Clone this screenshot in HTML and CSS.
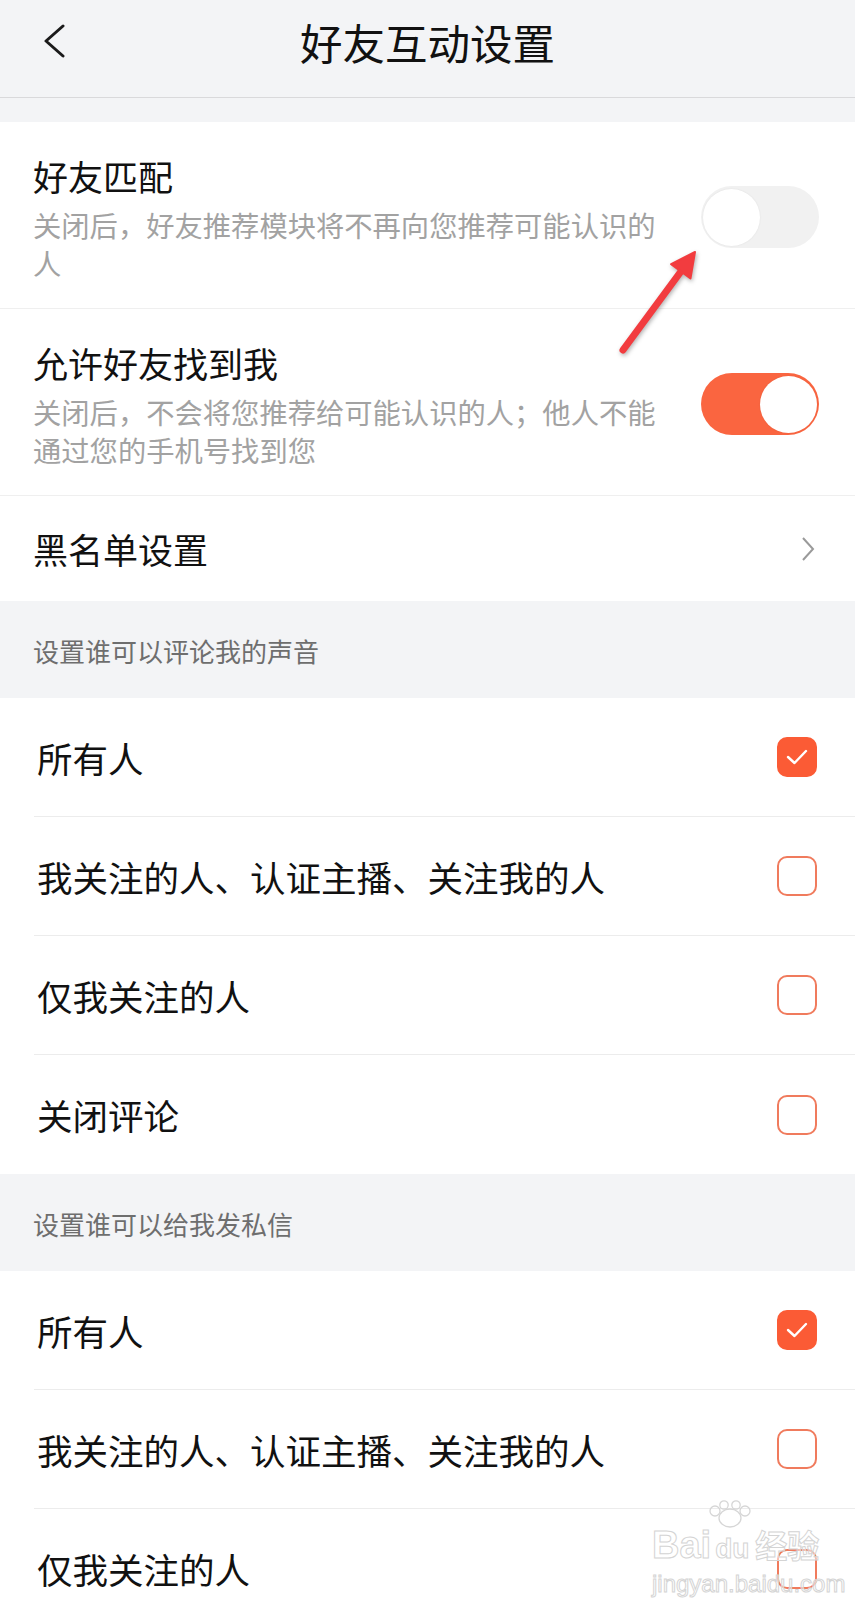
FILE: index.html
```html
<!DOCTYPE html>
<html lang="zh-CN">
<head>
  <meta charset="UTF-8" />
  <meta name="viewport" content="width=device-width, initial-scale=1.0"/>
  <title>好友互动设置</title>
  <link rel="stylesheet" href="styles.css">
</head>
<body>
<div class="page">
  <header class="nav">
    <span class="back">
      <svg width="24" height="34" viewBox="0 0 24 34"><polyline points="20,2 3,17 20,32" fill="none" stroke="#1a1a1a" stroke-width="3" stroke-linecap="round" stroke-linejoin="round"/></svg>
    </span>
    <h1>好友互动设置</h1>
    <span></span>
  </header>

  <div class="spacer"></div>

  <section class="group">
    <div class="switch-row">
      <div class="row-text">
        <div class="row-title">好友匹配</div>
        <div class="row-desc">关闭后，好友推荐模块将不再向您推荐可能认识的人</div>
      </div>
      <span class="switch"><span class="knob"></span></span>
    </div>
    <div class="switch-row">
      <div class="row-text">
        <div class="row-title">允许好友找到我</div>
        <div class="row-desc">关闭后，不会将您推荐给可能认识的人；他人不能通过您的手机号找到您</div>
      </div>
      <span class="switch on"><span class="knob"></span></span>
    </div>
    <div class="link-row">
      <span class="row-title">黑名单设置</span>
      <svg width="16" height="26" viewBox="0 0 16 26"><polyline points="3,2 13,13 3,24" fill="none" stroke="#9a9a9a" stroke-width="2"/></svg>
    </div>
  </section>

  <div class="group-label">设置谁可以评论我的声音</div>
  <ul class="options">
    <li class="option">所有人<span class="check on"><svg width="24" height="18" viewBox="0 0 24 18"><polyline points="3,9 9.5,15 21,3" fill="none" stroke="#fff" stroke-width="2.4" stroke-linecap="round" stroke-linejoin="round"/></svg></span></li>
    <li class="option">我关注的人、认证主播、关注我的人<span class="check"></span></li>
    <li class="option">仅我关注的人<span class="check"></span></li>
    <li class="option">关闭评论<span class="check"></span></li>
  </ul>

  <div class="group-label">设置谁可以给我发私信</div>
  <ul class="options">
    <li class="option">所有人<span class="check on"><svg width="24" height="18" viewBox="0 0 24 18"><polyline points="3,9 9.5,15 21,3" fill="none" stroke="#fff" stroke-width="2.4" stroke-linecap="round" stroke-linejoin="round"/></svg></span></li>
    <li class="option">我关注的人、认证主播、关注我的人<span class="check"></span></li>
    <li class="option">仅我关注的人<span class="check"></span></li>
  </ul>

  <!-- annotation arrow drawn on top of the screenshot -->
  <svg class="arrow" width="100" height="125" viewBox="0 0 100 125">
    <line x1="13" y1="110" x2="72" y2="30" stroke="#f23c3f" stroke-width="7" stroke-linecap="round"/>
    <polygon points="85,12 80.5,38.4 61.1,24.2" fill="#f23c3f" stroke="#f23c3f" stroke-width="2" stroke-linejoin="round"/>
  </svg>

  <div class="watermark">
    <svg class="paw" width="48" height="28" viewBox="0 0 48 28">
      <ellipse cx="24" cy="18" rx="11" ry="9" fill="none" stroke="#d6d6d6" stroke-width="1.3"/>
      <circle cx="9" cy="11" r="5" fill="none" stroke="#d6d6d6" stroke-width="1.3"/>
      <circle cx="18" cy="5" r="4.2" fill="none" stroke="#d6d6d6" stroke-width="1.3"/>
      <circle cx="30" cy="5" r="4.2" fill="none" stroke="#d6d6d6" stroke-width="1.3"/>
      <circle cx="39" cy="11" r="5" fill="none" stroke="#d6d6d6" stroke-width="1.3"/>
    </svg>
    <div class="wm-logo"><span>Bai</span><span class="wm-du">du</span><span class="wm-cn">经验</span></div>
    <div class="wm-url">jingyan.baidu.com</div>
  </div>
</div>
</body>
</html>
```

FILE: styles.css
```css
body {
  margin: 0;
  background-color: #f3f4f6;
  font-family: "Noto Sans CJK SC", "Noto Sans", sans-serif;
  color: #111;
}
.page {
  position: relative;
  overflow: hidden;
  height: 1600px;
}
.nav {
  height: 97px;
  border-bottom: 1px solid #d9d9db;
  display: grid;
  grid-template-columns: 1fr auto 1fr;
  align-items: start;
}
.nav h1 {
  margin: 0;
  font-size: 42.5px;
  font-weight: 400;
  line-height: 84px;
}
.back {
  padding: 24px 0 0 43px;
}
.spacer {
  height: 24px;
}
.group {
  background-color: #fff;
}
.switch-row {
  display: flex;
  align-items: center;
  padding: 30px 36px 26px 33px;
  border-bottom: 1px solid #efefef;
}
.row-text {
  width: 634px;
}
.row-title {
  font-size: 35px;
  line-height: 48px;
}
.row-desc {
  margin-top: 6px;
  font-size: 28.3px;
  line-height: 38px;
  color: #a2a2a2;
}
.switch {
  margin-left: auto;
  width: 118px;
  height: 62px;
  box-sizing: border-box;
  padding: 2px;
  border-radius: 31px;
  background-color: #f1f1f1;
  display: flex;
  align-items: center;
}
.switch.on {
  background-color: #fa6540;
  justify-content: flex-end;
}
.knob {
  width: 57px;
  height: 57px;
  border-radius: 50%;
  background-color: #fff;
  box-shadow: 0 0 2px rgba(0, 0, 0, 0.08);
}
.link-row {
  height: 105px;
  display: flex;
  align-items: center;
  justify-content: space-between;
  padding: 0 39px 0 33px;
}
.group-label {
  height: 97px;
  box-sizing: border-box;
  padding: 30px 33px 0;
  font-size: 26px;
  line-height: 40px;
  color: #6e6e6e;
}
.options {
  list-style: none;
  margin: 0;
  padding: 0;
  background-color: #fff;
}
.option {
  height: 119px;
  box-sizing: border-box;
  margin-left: 34px;
  padding: 0 38px 0 3px;
  display: flex;
  align-items: center;
  justify-content: space-between;
  border-bottom: 1px solid #ececec;
  font-size: 35.5px;
}
.option:last-child {
  border-bottom: none;
}
.check {
  width: 40px;
  height: 40px;
  box-sizing: border-box;
  border: 2px solid #f07b5d;
  border-radius: 10px;
}
.check.on {
  background-color: #fb5b35;
  border-color: #fb5b35;
  display: flex;
  align-items: center;
  justify-content: center;
}
.arrow {
  position: absolute;
  left: 610px;
  top: 240px;
  filter: drop-shadow(1px 2px 2px rgba(0, 0, 0, 0.3));
}
.watermark {
  position: absolute;
  left: 652px;
  top: 1500px;
  width: 175px;
  font-family: "Liberation Sans", sans-serif;
  color: rgba(255, 255, 255, 0.5);
  -webkit-text-stroke: 1px #d4d4d4;
}
.paw {
  position: absolute;
  left: 54px;
  top: 0;
}
.wm-logo {
  margin-top: 26px;
  display: flex;
  align-items: baseline;
  font-size: 38px;
  font-weight: 700;
  line-height: 36px;
}
.wm-du {
  margin-left: 4px;
  font-size: 28px;
}
.wm-cn {
  margin-left: 6px;
  font-family: "Noto Sans CJK SC", sans-serif;
  font-size: 32px;
}
.wm-url {
  margin-top: 4px;
  font-size: 24px;
  line-height: 26px;
}
```
